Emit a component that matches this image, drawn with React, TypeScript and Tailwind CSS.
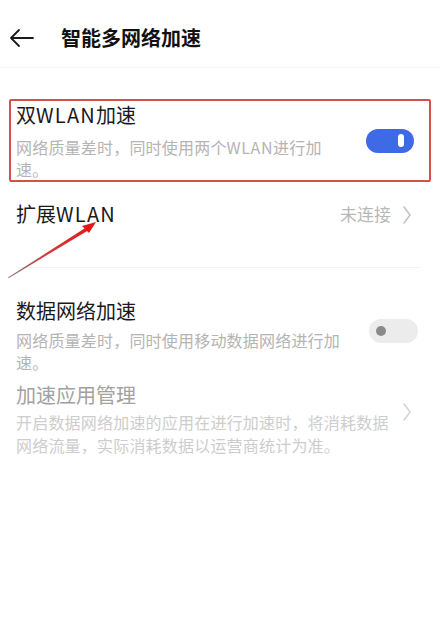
import type { ReactNode } from "react";

const FONT = { fontFamily: '"Noto Sans CJK SC", "Noto Sans", sans-serif' };

const Chevron = ({ color }: { color: string }): ReactNode => (
  <svg width="10" height="20" viewBox="0 0 10 20" fill="none">
    <path d="M2 2 L8 10 L2 18" stroke={color} strokeWidth="1.6" strokeLinecap="round" strokeLinejoin="round" />
  </svg>
);

const Toggle = ({ on }: { on: boolean }): ReactNode =>
  on ? (
    <div className="flex h-[24px] w-[48px] shrink-0 items-center justify-end rounded-full bg-[#3f6ae6] pr-[10px]">
      <div className="h-[13px] w-[6px] rounded-full bg-white" />
    </div>
  ) : (
    <div className="flex h-[24px] w-[49px] shrink-0 items-center rounded-full bg-[#ececec] pl-[7px]">
      <div className="h-[10px] w-[10px] rounded-full bg-[#8a8a8a]" />
    </div>
  );

// latin runs in the reference are a little wider than Noto's
const Wlan = ({ wide = false }: { wide?: boolean }): ReactNode => (
  <span className={wide ? "tracking-[1.2px]" : "tracking-[0.6px]"}>WLAN</span>
);

export default function App(): ReactNode {
  return (
    <div className="relative h-[643px] w-[440px] overflow-hidden bg-white" style={FONT}>
      {/* header */}
      <div className="flex h-[68px] items-center border-b border-[#f5f5f5] pt-[8px]">
        <svg className="ml-[9px]" width="26" height="20" viewBox="0 0 26 20" fill="none">
          <path d="M2 10 H24 M10 2 L2 10 L10 18" stroke="#1a1a1a" strokeWidth="1.8" strokeLinecap="round" strokeLinejoin="round" />
        </svg>
        <span className="ml-[26px] text-[20px] font-bold leading-[28px] text-[#111]">智能多网络加速</span>
      </div>

      {/* 双WLAN加速 (highlighted) */}
      <div className="mx-[9px] mt-[31px] flex items-center rounded-[2px] border-2 border-[#d4504c] pl-[5px] pr-[15px]">
        <div className="flex-1">
          <div className="text-[20px] leading-[28px] text-[#1a1a1a]">
            双<Wlan wide />加速
          </div>
          <div className="mt-[7px] text-[16px] leading-[22px] tracking-[0.2px] text-[#b4b4b4]">
            网络质量差时，同时使用两个<Wlan />进行加
            <br />
            速。
          </div>
        </div>
        <Toggle on />
      </div>

      {/* 扩展WLAN */}
      <div className="flex h-[85px] items-start pl-[16px] pr-[28px] pt-[18px]">
        <span className="flex-1 text-[20px] leading-[28px] text-[#1a1a1a]">
          扩展<Wlan wide />
        </span>
        <span className="text-[17px] leading-[28px] text-[#b8b8b8]">未连接</span>
        <span className="ml-[11px] mt-[5px]">
          <Chevron color="#c4c4c4" />
        </span>
      </div>
      <div className="ml-[16px] mr-[20px] h-px bg-[#f4f4f4]" />

      {/* 数据网络加速 */}
      <div className="flex items-start pl-[16px] pr-[22px] pt-[29px]">
        <div className="flex-1">
          <div className="text-[20px] leading-[28px] text-[#1a1a1a]">数据网络加速</div>
          <div className="mt-[4px] text-[16px] leading-[22px] tracking-[0.2px] text-[#b4b4b4]">
            网络质量差时，同时使用移动数据网络进行加
            <br />
            速。
          </div>
        </div>
        <div className="mt-[22px]">
          <Toggle on={false} />
        </div>
      </div>

      {/* 加速应用管理 (disabled) */}
      <div className="mt-[8px] flex items-center pl-[16px] pr-[28px]">
        <div className="flex-1">
          <div className="text-[20px] leading-[28px] text-[#a2a2a2]">加速应用管理</div>
          <div className="mt-[2px] text-[16px] leading-[23px] tracking-[0.2px] text-[#cdcdcd]">
            开启数据网络加速的应用在进行加速时，将消耗数据
            <br />
            网络流量，实际消耗数据以运营商统计为准。
          </div>
        </div>
        <span className="mb-[14px]">
          <Chevron color="#d6d6d6" />
        </span>
      </div>

      {/* red annotation arrow */}
      <svg className="pointer-events-none absolute left-0 top-0" width="440" height="643" viewBox="0 0 440 643">
        <defs>
          <linearGradient id="arrowGrad" x1="8" y1="277" x2="95" y2="223" gradientUnits="userSpaceOnUse">
            <stop offset="0" stopColor="#8a7a80" />
            <stop offset="0.45" stopColor="#d23a3a" />
            <stop offset="1" stopColor="#e01818" />
          </linearGradient>
        </defs>
        <polygon points="8,277.4 86,227.6 88,230.4 8.6,278.2" fill="url(#arrowGrad)" />
        <polygon points="96,222 82,226 89,233" fill="#e01818" />
      </svg>
    </div>
  );
}
